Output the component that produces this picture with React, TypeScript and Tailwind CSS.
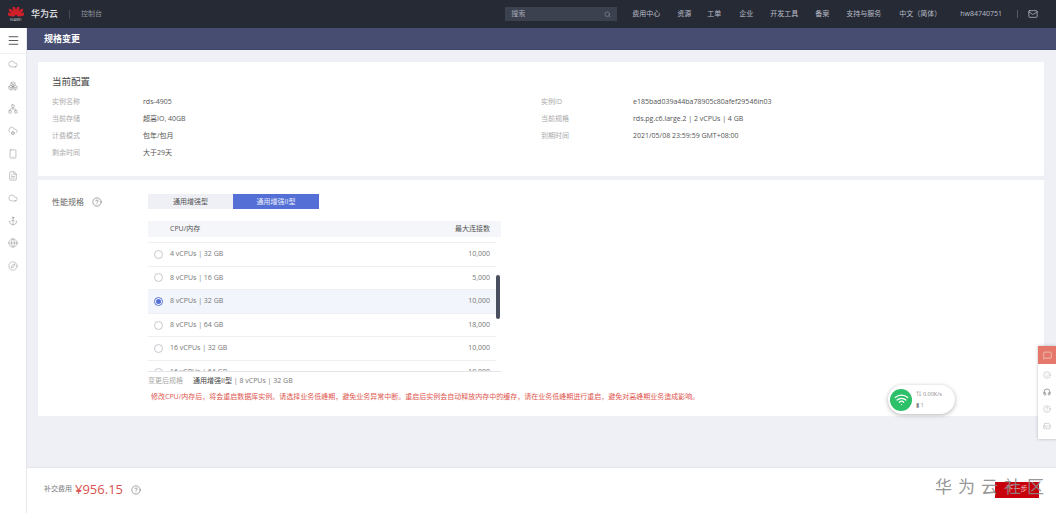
import {
  AlertTriangle,
  Anchor,
  Cloud,
  CloudCog,
  Compass,
  Globe,
  HardDrive,
  HelpCircle,
  Mail,
  Menu,
  MessageSquare,
  Search,
  Smartphone,
  Wifi,
  FileText,
  Network,
  Boxes,
  Headphones,
  Smile,
} from "lucide-react";

const FONT = "font-['Open_Sans','Noto_Sans_CJK_SC',sans-serif]";

const navItems = [
  { label: "费用中心", className: "ml-[15px]" },
  { label: "资源", className: "ml-[17px]" },
  { label: "工单", className: "ml-[16px]" },
  { label: "企业", className: "ml-[18px]" },
  { label: "开发工具", className: "ml-[17px]" },
  { label: "备案", className: "ml-[17px]" },
  { label: "支持与服务", className: "ml-[17px]" },
  { label: "中文（简体）", className: "ml-[18px]" },
  { label: "hw84740751", className: "ml-[19px]" },
];

const sideIcons = [Cloud, Boxes, Network, CloudCog, Smartphone, FileText, Cloud, Anchor, Globe, Compass];

const specRows = [
  { name: "4 vCPUs | 32 GB", max: "10,000" },
  { name: "8 vCPUs | 16 GB", max: "5,000" },
  { name: "8 vCPUs | 32 GB", max: "10,000", selected: true },
  { name: "8 vCPUs | 64 GB", max: "18,000" },
  { name: "16 vCPUs | 32 GB", max: "10,000" },
  { name: "16 vCPUs | 64 GB", max: "10,000" },
];

const leftInfo = [
  ["实例名称", "rds-4905"],
  ["当前存储", "超高IO, 40GB"],
  ["计费模式", "包年/包月"],
  ["剩余时间", "大于29天"],
];

const rightInfo = [
  ["实例ID", "e185bad039a44ba78905c80afef29546in03"],
  ["当前规格", "rds.pg.c6.large.2 | 2 vCPUs | 4 GB"],
  ["到期时间", "2021/05/08 23:59:59 GMT+08:00"],
];

function Logo() {
  const petals = [-75, -45, -15, 15, 45, 75];
  return (
    <div className="flex w-[27px] flex-col items-center">
      <svg width="16" height="11" viewBox="0 0 32 22">
        {petals.map((a) => (
          <ellipse key={a} cx="16" cy="8" rx="3" ry="9" fill="#d2202a" transform={`rotate(${a} 16 18) translate(0 -1)`} />
        ))}
      </svg>
      <span className="mt-[1px] text-[3px] leading-[3px] text-[#ddd]">HUAWEI</span>
    </div>
  );
}

function InfoRow({ label, value, valueLeft }: { label: string; value: string; valueLeft: string }) {
  return (
    <div className="flex h-[17px] items-center">
      <span className={`text-[#aaa] ${valueLeft}`}>{label}</span>
      <span className="text-[#555]">{value}</span>
    </div>
  );
}

export default function App() {
  return (
    <div className={`relative flex h-[513px] w-[1056px] flex-col overflow-hidden bg-white text-[7px] ${FONT}`}>
      {/* top bar */}
      <header className="flex h-[28px] items-center bg-[#262a35] pl-[2px] text-[#b9bcc6]">
        <Logo />
        <span className="ml-[2px] text-[9px] font-medium text-[#e4e5ea]">华为云</span>
        <span className="ml-[11px] h-[9px] w-px bg-[#444955]" />
        <span className="ml-[11px] text-[#8e929e]">控制台</span>
        <div className="ml-auto flex items-center">
          <div className="flex h-[14px] w-[112px] items-center justify-between bg-[#3c4150] px-[6px] text-[#a5a8b4]">
            <span>搜索</span>
            <Search size={7} strokeWidth={1.5} />
          </div>
          {navItems.map((item) => (
            <span key={item.label} className={`whitespace-nowrap ${item.className}`}>
              {item.label}
            </span>
          ))}
          <span className="ml-[15px] h-[8px] w-px bg-[#555a66]" />
          <Mail size={10} strokeWidth={1.5} className="ml-[10px] mr-[18px] text-[#d8d9de]" />
        </div>
      </header>

      <div className="flex min-h-0 flex-1">
        {/* sidebar */}
        <aside className="flex w-[27px] flex-col items-center border-r border-[#e6e7ec] bg-white">
          <div className="flex h-[26px] w-full items-center justify-center border-b border-[#f0f0f3]">
            <Menu size={13} strokeWidth={1.5} className="text-[#333]" />
          </div>
          <div className="mt-[5px] flex flex-col items-center gap-[12.4px]">
            {sideIcons.map((Icon, i) => (
              <Icon key={i} size={10} strokeWidth={1} className="text-[#777]" />
            ))}
          </div>
        </aside>

        <main className="flex min-w-0 flex-1 flex-col bg-[#eff0f5]">
          <div className="flex h-[22px] items-center border-b border-[#3f4564] bg-[#474d70] pl-[17px] text-[9px] font-bold text-white">
            规格变更
          </div>

          <div className="flex flex-1 flex-col gap-[4px] pl-[11px] pr-[12px] pt-[12px]">
            {/* current config */}
            <section className="h-[114px] rounded-[1px] bg-white pl-[14px] pt-[13px]">
              <h2 className="text-[9.5px] leading-[14px] text-[#444]">当前配置</h2>
              <div className="mt-[5px] flex">
                <div className="w-[489px]">
                  {leftInfo.map(([k, v]) => (
                    <InfoRow key={k} label={k} value={v} valueLeft="w-[91px]" />
                  ))}
                </div>
                <div>
                  {rightInfo.map(([k, v]) => (
                    <InfoRow key={k} label={k} value={v} valueLeft="w-[92px]" />
                  ))}
                </div>
              </div>
            </section>

            {/* spec picker */}
            <section className="flex h-[236px] bg-white pl-[14px] pt-[14px]">
              <div className="flex h-[16px] w-[96px] items-center text-[#666]">
                <span className="text-[8px]">性能规格</span>
                <HelpCircle size={10} strokeWidth={1.25} className="ml-[8px] text-[#555]" />
              </div>
              <div className="w-[353px]">
                <div className="flex h-[15px] text-center leading-[15px]">
                  <div className="w-[85px] bg-[#eef0f6] text-[#555]">通用增强型</div>
                  <div className="w-[86px] bg-[#5470d6] text-[#e8ecfb]">通用增强II型</div>
                </div>

                <div className="mt-[12px] flex h-[16px] items-center justify-between bg-[#f4f6fa] pl-[22px] pr-[11px] text-[#555]">
                  <span>CPU/内存</span>
                  <span>最大连接数</span>
                </div>

                <div className="relative mt-[5px] h-[130px] overflow-hidden border-b border-[#e4e5ea]">
                  <div className="w-[348px] border-t border-[#eeeff3]">
                    {specRows.map((row) => (
                      <div
                        key={row.name}
                        className={`flex h-[23.6px] items-center justify-between border-b border-[#eeeff3] pr-[6px] text-[#777] ${
                          row.selected ? "bg-[#f2f5fb]" : ""
                        }`}
                      >
                        <span className="flex items-center">
                          <span
                            className={`ml-[6px] mr-[7px] flex h-[9px] w-[9px] items-center justify-center rounded-full border ${
                              row.selected ? "border-[#5470d6]" : "border-[#c6c8ce]"
                            } bg-white`}
                          >
                            {row.selected && <span className="h-[5px] w-[5px] rounded-full bg-[#5470d6]" />}
                          </span>
                          {row.name}
                        </span>
                        <span>{row.max}</span>
                      </div>
                    ))}
                  </div>
                  {/* scroll thumb */}
                  <div className="absolute left-[348px] top-[33px] h-[44px] w-[4px] rounded-full bg-[#4a4f60]" />
                </div>

                <div className="mt-[4px] flex h-[11px] items-center whitespace-nowrap">
                  <span className="w-[45px] text-[#aaa]">变更后规格</span>
                  <span className="text-[#444]">通用增强II型</span>
                  <span className="text-[#777]">&nbsp;| 8 vCPUs | 32 GB</span>
                </div>
                <div className="mt-[5px] flex h-[11px] items-center whitespace-nowrap text-[#e0574f]">
                  <AlertTriangle size={8} fill="#f5b400" strokeWidth={1} className="mr-[3px] text-[#f5b400]" />
                  修改CPU/内存后，将会重启数据库实例。请选择业务低峰期，避免业务异常中断。重启后实例会自动释放内存中的缓存，请在业务低峰期进行重启，避免对高峰期业务造成影响。
                </div>
              </div>
            </section>
          </div>

          {/* footer */}
          <footer className="flex h-[46px] items-center border-t border-[#e4e5ea] bg-white pl-[17px] pr-[17px] pb-[2px]">
            <span className="text-[#777]">补交费用</span>
            <span className="ml-[3px] text-[13px] text-[#d9534f]">¥956.15</span>
            <HelpCircle size={10} strokeWidth={1.25} className="ml-[8px] text-[#555]" />
            <button className="ml-auto h-[16px] w-[44px] bg-[#c7000b] text-[7px] text-[#f3c4c6]">下一步</button>
          </footer>
        </main>
      </div>

      {/* network speed pill */}
      <div className="absolute left-[888px] top-[385px] flex h-[29px] w-[67px] items-center rounded-full bg-white pl-[2px] shadow-[0_1px_4px_rgba(0,0,0,0.3)]">
        <div className="flex h-[22px] w-[22px] items-center justify-center rounded-full bg-[#2cc069]">
          <Wifi size={15} className="text-white" strokeWidth={2} />
        </div>
        <div className="ml-[4px] text-[5.5px] leading-[11px] text-[#888]">
          <div>⇅ 0.00K/s</div>
          <div>▮ 1</div>
        </div>
      </div>

      {/* right tool rail */}
      <div className="absolute left-[1038px] top-[346px] flex h-[93px] w-[18px] flex-col items-center bg-white shadow-[0_0_3px_rgba(0,0,0,0.25)]">
        <div className="flex h-[18px] w-full items-center justify-center bg-[#e5786a]">
          <MessageSquare size={9} strokeWidth={1.25} className="text-white" />
        </div>
        <div className="mt-[7px] flex flex-col items-center gap-[9px] text-[#888]">
          <Smile size={8} strokeWidth={1} />
          <Headphones size={8} strokeWidth={1.5} className="text-[#444]" />
          <HelpCircle size={8} strokeWidth={1} />
          <HardDrive size={8} strokeWidth={1} />
        </div>
      </div>

      {/* watermark */}
      <div className="absolute left-[935px] top-[475px] whitespace-nowrap text-[17px] leading-[24px] tracking-[6px] text-[#8a8a8a]/90">
        华为云社区
      </div>
    </div>
  );
}
